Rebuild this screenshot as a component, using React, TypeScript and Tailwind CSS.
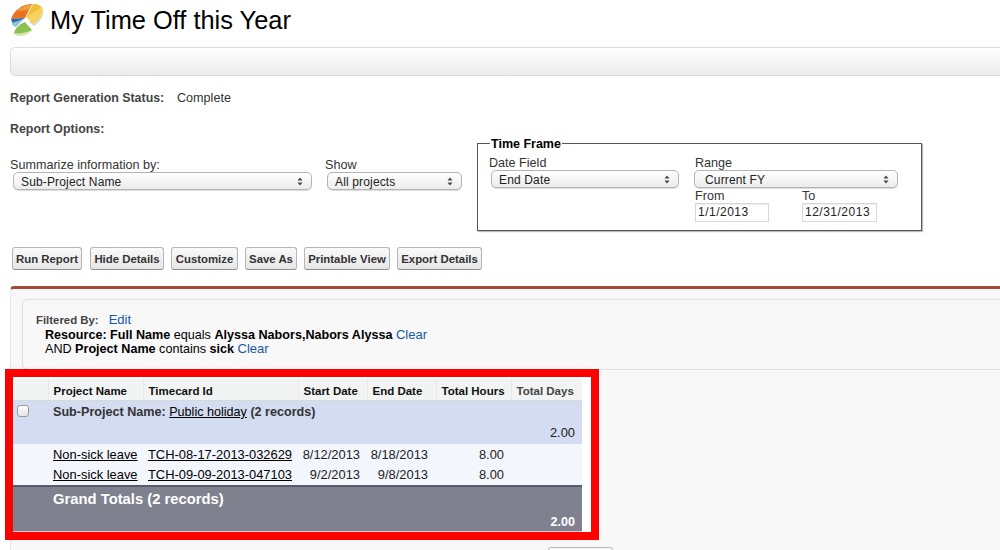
const font = { fontFamily: '"Liberation Sans", Arial, sans-serif' };

function Pie() {
  return (
    <svg width="36" height="36" viewBox="0 0 36 36" className="shrink-0">
      <path d="M34 9 C35 14 30 21 25 24 L20 20 Z" fill="#d9d9d2" />
      <path d="M2 17 C5 8 14 2 23 2 L16 16 Z" fill="#ee6f22" />
      <path d="M8 9 C12 5 17 3 23 2 L20 8 Z" fill="#e9a13a" />
      <path d="M24 2 C30 2 34 5 34 8 C34 13 29 19 24 22 L17 15 Z" fill="#f6d35f" />
      <path d="M24 2 C29 2 32 4 32 6 L19 14 Z" fill="#efbf3a" />
      <path d="M2 17 L16 16 L4 23 Z" fill="#2a6fb0" />
      <path d="M3 21 L15 17 L7 25 C5 25 3 23 3 21 Z" fill="#8fc5dd" />
      <path d="M5 31 C6 26 11 22 16 20 L23 28 C20 31 15 33 11 33 C8 33 6 33 5 31 Z" fill="#8cc152" />
      <path d="M5 31 C9 32 17 31 23 28 C20 32 15 34 11 34 C8 34 6 33 5 31 Z" fill="#d5e6b4" />
    </svg>
  );
}

function Arrows() {
  return (
    <svg width="6" height="9" viewBox="0 0 6 9" className="shrink-0">
      <path d="M3 0.5 L5.5 3.5 H0.5 Z M3 8.5 L0.5 5.5 H5.5 Z" fill="#444" />
    </svg>
  );
}

function Select({ label, w }: { label: string; w: string }) {
  return (
    <div className={`${w} h-[18px] flex items-center justify-between pr-[8px] rounded-[5px] border border-[#b4b4b4] bg-gradient-to-b from-white to-[#ececec] text-[12px] text-[#222] tracking-[0.15px] shadow-[0_1px_0_#ddd]`}>
      <span className="pt-px">{label}</span>
      <Arrows />
    </div>
  );
}

function Btn({ label, w }: { label: string; w: string }) {
  return (
    <div className={`${w} h-[23px] pt-[2px] flex items-center justify-center rounded-[3px] border border-[#b5b5b5] border-b-[#8f8f8f] bg-gradient-to-b from-[#fafafa] to-[#e6e6e6] text-[11.4px] font-bold text-[#333] whitespace-nowrap`}>
      {label}
    </div>
  );
}

function Th({ label, first }: { label?: string; first?: boolean }) {
  return (
    <th className={`h-[21px] px-[5px] pt-[3px] leading-[16px] text-left text-[11.5px] font-bold text-[#111] whitespace-nowrap bg-[#f2f3f3] border-b border-[#d4dadc] ${first ? "" : "border-l border-l-[#e8e8e8]"}`}>
      {label}
    </th>
  );
}

function DetailRow({ name, id, start, end }: { name: string; id: string; start: string; end: string }) {
  return (
    <tr className="h-[21px] text-[12.9px] leading-[16px] text-[#222]">
      <td />
      <td className="px-[5px] underline text-black whitespace-nowrap">{name}</td>
      <td className="px-[5px] underline text-black whitespace-nowrap">{id}</td>
      <td className="pr-[7px] text-right">{start}</td>
      <td className="pr-[8px] text-right">{end}</td>
      <td className="pr-[7px] text-right">8.00</td>
      <td />
    </tr>
  );
}

export default function App() {
  return (
    <div style={font} className="w-[1000px] h-[550px] overflow-hidden bg-white text-[12.6px] text-[#333]">
      <div className="h-[47px] pl-[9px] pt-[2px] flex items-start gap-[5px]">
        <Pie />
        <h1 className="text-[25.4px] leading-[36px] text-black font-normal whitespace-nowrap">My Time Off this Year</h1>
      </div>

      <div className="ml-[10px] h-[29px] rounded-l-[5px] border border-r-0 border-[#dcdcdc] bg-gradient-to-b from-white to-[#ebebeb]" />

      <div className="ml-[10px] mt-[15px] h-[14px] leading-[14px] flex">
        <span className="w-[167px] text-[12.4px] font-bold text-[#444]">Report Generation Status:</span>
        <span>Complete</span>
      </div>
      <div className="ml-[10px] mt-[17px] h-[14px] leading-[14px] text-[12.4px] font-bold text-[#444]">Report Options:</div>

      <div className="flex items-start h-[91px] mt-[6px]">
        <div className="ml-[10px] w-[315px] pt-[16px]">
          <div className="h-[14px] leading-[14px] text-[#333]">Summarize information by:</div>
          <div className="ml-[3px] [&>div]:pl-[7px]"><Select label="Sub-Project Name" w="w-[299px]" /></div>
        </div>
        <div className="w-[152px] pt-[16px]">
          <div className="h-[14px] leading-[14px] text-[#333]">Show</div>
          <div className="ml-[2px] [&>div]:pl-[7px]"><Select label="All projects" w="w-[135px]" /></div>
        </div>
        <fieldset className="w-[445px] h-[95px] border border-[#555] shadow-[1px_1px_1px_#bbb] pl-[11px] pr-[22px] pt-[7px] -mt-[6px]">
          <legend className="ml-[1px] px-[1px] pt-px text-[12.5px] font-bold text-black leading-[14px]">Time Frame</legend>
          <div className="flex -mt-px">
            <div className="w-[206px] shrink-0">
              <div className="h-[12px] leading-[12px] text-[#333]">Date Field</div>
              <div className="ml-[2px] mt-[1px] [&>div]:pl-[7px]"><Select label="End Date" w="w-[188px]" /></div>
            </div>
            <div>
              <div className="h-[12px] leading-[12px] text-[#333]">Range</div>
              <div className="mt-[1px] -ml-[1px] [&>div]:pl-[10px]"><Select label="Current FY" w="w-[204px]" /></div>
              <div className="flex mt-[1px]">
                <div className="w-[107px]">
                  <div className="h-[14px] leading-[14px] text-[#333]">From</div>
                  <div className="w-[74px] h-[19px] border border-[#d8d8d8] pl-[2px] leading-[17px] text-[12px] text-[#222] tracking-[0.5px] shadow-[inset_0_1px_1px_#eee]">1/1/2013</div>
                </div>
                <div>
                  <div className="h-[14px] leading-[14px] text-[#333]">To</div>
                  <div className="w-[75px] h-[19px] border border-[#d8d8d8] pl-[2px] leading-[17px] text-[12px] text-[#222] tracking-[0.5px] whitespace-nowrap shadow-[inset_0_1px_1px_#eee]">12/31/2013</div>
                </div>
              </div>
            </div>
          </div>
        </fieldset>
      </div>

      <div className="ml-[12px] mt-[14px] flex">
        <Btn label="Run Report" w="w-[70px] mr-[8px]" />
        <Btn label="Hide Details" w="w-[74px] mr-[7px]" />
        <Btn label="Customize" w="w-[67px] mr-[7px]" />
        <Btn label="Save As" w="w-[52px] mr-[7px]" />
        <Btn label="Printable View" w="w-[86px] mr-[7px]" />
        <Btn label="Export Details" w="w-[85px]" />
      </div>

      <div className="ml-[10px] mt-[16px] h-[300px] border-t-[3px] border-t-[#a5493a] border-l border-l-[#e8e8e8] rounded-tl-[4px] bg-[#f8f8f8]">
        <div className="ml-[11px] mt-[10px] h-[71px] pl-[13px] pt-[13px] rounded-l-[6px] border border-r-0 border-[#dfdfdf] text-[12.6px] leading-[14.5px] text-black">
          <div>
            <span className="text-[11.4px] font-bold text-[#444]">Filtered By:</span>
            <span className="ml-[10px] text-[13px] text-[#15589f]">Edit</span>
          </div>
          <div className="pl-[9px]">
            <b>Resource: Full Name</b> equals <b>Alyssa Nabors,Nabors Alyssa</b> <span className="text-[13px] text-[#15589f]">Clear</span>
          </div>
          <div className="pl-[9px]">
            AND <b>Project Name</b> contains <b>sick</b> <span className="text-[13px] text-[#15589f]">Clear</span>
          </div>
        </div>

        <div className="-ml-[6px] -mt-[1px] w-[594px] h-[171px] border-[8px] border-[#ff0000] bg-white pt-[2px]">
          <table className="w-[569px] table-fixed border-collapse">
            <colgroup>
              <col className="w-[35px]" />
              <col className="w-[95px]" />
              <col className="w-[155px]" />
              <col className="w-[69px]" />
              <col className="w-[69px]" />
              <col className="w-[75px]" />
              <col className="w-[71px]" />
            </colgroup>
            <thead>
              <tr>
                <Th first />
                <Th label="Project Name" />
                <Th label="Timecard Id" />
                <Th label="Start Date" />
                <Th label="End Date" />
                <Th label="Total Hours" />
                <th className="h-[21px] px-[5px] pt-[3px] leading-[16px] text-left text-[11.5px] font-bold text-[#444] whitespace-nowrap bg-[#f2f3f3] border-b border-[#d4dadc] border-l border-l-[#e8e8e8]">Total Days</th>
              </tr>
            </thead>
            <tbody>
              <tr className="h-[23px] bg-[#d3dcf0]">
                <td className="pl-[4px] pb-px">
                  <div className="w-[12px] h-[12px] rounded-[3px] border border-[#999] bg-gradient-to-b from-white to-[#e4e4e4]" />
                </td>
                <td colSpan={6} className="px-[5px] pt-px leading-[16px] text-[12.6px] font-bold text-[#333] whitespace-nowrap">
                  Sub-Project Name: <span className="font-normal underline text-black">Public holiday</span> (2 records)
                </td>
              </tr>
              <tr className="h-[21px] bg-[#d3dcf0]">
                <td colSpan={6} />
                <td className="pr-[7px] pb-[2px] leading-[16px] text-right text-[12.9px] text-[#222]">2.00</td>
              </tr>
            </tbody>
            <tbody className="bg-[#f3f6fd]">
              <DetailRow name="Non-sick leave" id="TCH-08-17-2013-032629" start="8/12/2013" end="8/18/2013" />
              <DetailRow name="Non-sick leave" id="TCH-09-09-2013-047103" start="9/2/2013" end="9/8/2013" />
            </tbody>
            <tbody className="bg-[#80818f] text-white font-bold">
              <tr className="h-[25px] border-t-2 border-t-[#5a5a68]">
                <td />
                <td colSpan={6} className="px-[5px] leading-[18px] text-[14.8px] whitespace-nowrap">Grand Totals (2 records)</td>
              </tr>
              <tr className="h-[20px] border-b border-b-[#cfcfd4]">
                <td colSpan={6} />
                <td className="pr-[7px] pt-[2px] leading-[14px] text-right text-[12.6px]">2.00</td>
              </tr>
            </tbody>
          </table>
        </div>

        <div className="ml-[537px] mt-[7px] w-[65px] h-[20px] rounded-[3px] border border-[#b5b5b5] bg-gradient-to-b from-[#fafafa] to-[#e6e6e6]" />
      </div>
    </div>
  );
}
